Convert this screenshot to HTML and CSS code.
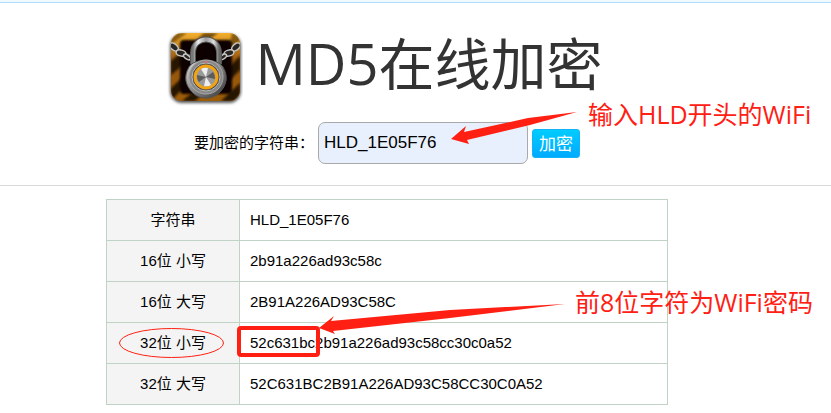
FILE: index.html
```html
<!DOCTYPE html>
<html lang="zh-CN">
<head>
<meta charset="utf-8">
<title>MD5在线加密</title>
<link rel="stylesheet" href="styles.css">
</head>
<body>
<div class="page">
  <header class="header">
    <div class="brand">
      <svg class="logo" viewBox="0 0 76 78" aria-hidden="true">
        <defs>
          <linearGradient id="gold" x1="0" y1="0" x2="0" y2="1">
            <stop offset="0" stop-color="#f5b02c"/><stop offset=".4" stop-color="#94550d"/><stop offset="1" stop-color="#9c5c08"/>
          </linearGradient>
          <linearGradient id="steel" x1="0" y1="0" x2="1" y2="1">
            <stop offset="0" stop-color="#ddd"/><stop offset=".5" stop-color="#858585"/><stop offset="1" stop-color="#333"/>
          </linearGradient>
          <linearGradient id="bow" x1="0" y1="0" x2="1" y2="0">
            <stop offset="0" stop-color="#777"/><stop offset=".2" stop-color="#eee"/><stop offset=".5" stop-color="#999"/><stop offset=".8" stop-color="#ddd"/><stop offset="1" stop-color="#666"/>
          </linearGradient>
          <clipPath id="tile"><rect x="4" y="4" width="69" height="68" rx="11"/></clipPath>
          <filter id="shade" x="-20%" y="-20%" width="140%" height="140%"><feGaussianBlur stdDeviation="1.5"/></filter>
          <filter id="soft"><feGaussianBlur stdDeviation="1"/></filter>
        </defs>
        <rect x="3" y="5" width="71" height="69" rx="12" fill="#555" filter="url(#shade)"/>
        <g clip-path="url(#tile)">
          <rect x="4" y="4" width="69" height="68" fill="url(#gold)"/>
          <g fill="#281703" filter="url(#soft)">
            <path d="M10 4H20L4 15V10Z" opacity=".5"/><path d="M37 4H51L39 13H27Z" opacity=".6"/><path d="M65 4H73V12L62 18Z" opacity=".5"/>
            <path d="M4 32 16 22V36L4 46Z"/><path d="M4 59 17 47V58L4 72Z"/><path d="M73 27 62 38V52L73 41Z"/>
            <path d="M73 54 54 72H67L73 66Z"/><path d="M15 72 30 60H42L28 72Z"/>
          </g>
          <rect x="13" y="11" width="52" height="54" rx="4" fill="#070605" filter="url(#soft)"/>
          <path d="M4 17 12 23 24 28M73 17 64 23 52 28" fill="none" stroke="#555" stroke-width="4"/>
          <g fill="#292521" stroke="#c5c5c5" stroke-width="1.5">
            <ellipse cx="7" cy="18" rx="5" ry="3" transform="rotate(40 7 18)"/><ellipse cx="14" cy="24" rx="5" ry="3" transform="rotate(15 14 24)"/><ellipse cx="20" cy="28" rx="4" ry="2" transform="rotate(35 20 28)"/>
            <ellipse cx="69" cy="18" rx="5" ry="3" transform="rotate(-40 69 18)"/><ellipse cx="62" cy="24" rx="5" ry="3" transform="rotate(-15 62 24)"/><ellipse cx="56" cy="28" rx="4" ry="2" transform="rotate(-35 56 28)"/>
          </g>
          <path d="M26 35V24C26 6 52 6 52 24V35" fill="none" stroke="#555" stroke-width="6"/>
          <path d="M26 35V24C26 6 52 6 52 24V35" fill="none" stroke="url(#bow)" stroke-width="4"/>
          <path d="M22 38C27 29 51 29 56 38C62 48 59 57 53 63C46 71 32 71 25 63C19 57 16 48 22 38Z" fill="url(#steel)" stroke="#555"/>
          <circle cx="39" cy="48" r="17" fill="#888" stroke="#aaa"/>
          <circle cx="39" cy="48" r="14" fill="#484848" stroke="#bbb"/>
          <circle cx="39" cy="48" r="11" fill="#999" stroke="#f2a313" stroke-width="3"/>
          <path d="M39 48 34 40A9 9 0 0 1 41 39ZM39 48 44 56A9 9 0 0 1 37 57Z" fill="#eee"/>
          <path d="M39 48 30 46A9 9 0 0 0 32 53ZM39 48 48 50A9 9 0 0 0 46 43Z" fill="#5c5c5c"/>
          <path d="M37 34h4l-2-3z" fill="#c77"/>
        </g>
      </svg>
      <h1 class="title">MD5在线加密</h1>
    </div>
    <form class="form">
      <label class="form-label" for="source">要加密的字符串：</label>
      <input class="field" id="source" type="text" value="HLD_1E05F76">
      <button class="submit" type="button">加密</button>
    </form>
  </header>
  <main class="main">
    <table class="results">
      <tbody>
        <tr><th scope="row">字符串</th><td>HLD_1E05F76</td></tr>
        <tr><th scope="row">16位 小写</th><td>2b91a226ad93c58c</td></tr>
        <tr><th scope="row">16位 大写</th><td>2B91A226AD93C58C</td></tr>
        <tr><th scope="row">32位 小写</th><td>52c631bc2b91a226ad93c58cc30c0a52</td></tr>
        <tr><th scope="row">32位 大写</th><td>52C631BC2B91A226AD93C58CC30C0A52</td></tr>
      </tbody>
    </table>
  </main>
  <svg class="marks" width="831" height="413" viewBox="0 0 831 413" aria-hidden="true">
    <path class="arrow" d="M577 112 528 118 464 132 466 126 451 139 469 144 467 140 530 125Z"/>
    <path class="arrow" d="M565 304 450 310 331 321 334 316 319 328 335 334 333 331 450 318Z"/>
    <rect class="box" x="239" y="328" width="79" height="27" rx="2"/>
    <ellipse class="ring" cx="171.500" cy="343" rx="52" ry="14.500"/>
  </svg>
  <p class="note note-input">输入HLD开头的WiFi</p>
  <p class="note note-result">前8位字符为WiFi密码</p>
</div>
</body>
</html>
```
FILE: styles.css
```css
* {
  box-sizing: border-box;
}

body {
  margin: 0;
  background: #fff;
  color: #000;
  font: 15px/20px "Liberation Sans", "Noto Sans CJK SC", sans-serif;
}

.page {
  position: relative;
  border-top: 2px solid #f3faff;
}

.header {
  padding: 22px 57px 21px 0;
  border-top: 1px solid #aadfff;
  border-bottom: 1px solid #d9d9d9;
}

.brand {
  display: flex;
  justify-content: center;
  gap: 12px;
  height: 97px;
  padding-right: 4px;
}

.logo {
  width: 76px;
  height: 78px;
  margin-top: 4px;
}

.title {
  margin: 0;
  color: #333;
  font: 400 56px/76px "Open Sans", "Noto Sans CJK SC", sans-serif;
}

.form {
  display: flex;
  justify-content: center;
  align-items: center;
}

.form-label {
  margin-right: 4px;
}

.field {
  width: 210px;
  height: 42px;
  margin-right: 4px;
  padding: 0 5px;
  border: 1px solid #a9a9a9;
  border-radius: 7px;
  background: #e8f0fe;
  color: #000;
  font: 17px "Liberation Sans", sans-serif;
}

.submit {
  width: 48px;
  height: 29px;
  padding: 0;
  border: 1px solid #12b4f5;
  border-radius: 3px;
  background: linear-gradient(#00ccff, #00aaff);
  color: #fff;
  font: 17px/24px "Noto Sans CJK SC", sans-serif;
}

.main {
  padding: 13px 57px 8px 0;
}

.results {
  width: 562px;
  margin: 0 auto;
  border-collapse: collapse;
  table-layout: fixed;
}

.results th,
.results td {
  height: 41px;
  padding: 0 10px;
  border: 1px solid #c1d3c4;
  font-weight: 400;
}

.results th {
  width: 133px;
  background: #f4f4f4;
  text-align: center;
}

.marks {
  position: absolute;
  top: -2px;
  left: 0;
  pointer-events: none;
}

.arrow {
  fill: #ff2013;
}

.box {
  fill: none;
  stroke: #ff2013;
  stroke-width: 4;
}

.ring {
  fill: none;
  stroke: #ff2013;
}

.note {
  position: absolute;
  margin: 0;
  color: #ff2013;
  font: 25px/32px "Open Sans", "Noto Sans CJK SC", sans-serif;
  white-space: nowrap;
}

.note-input {
  top: 96px;
  left: 588px;
}

.note-result {
  top: 284px;
  left: 575px;
}
```
